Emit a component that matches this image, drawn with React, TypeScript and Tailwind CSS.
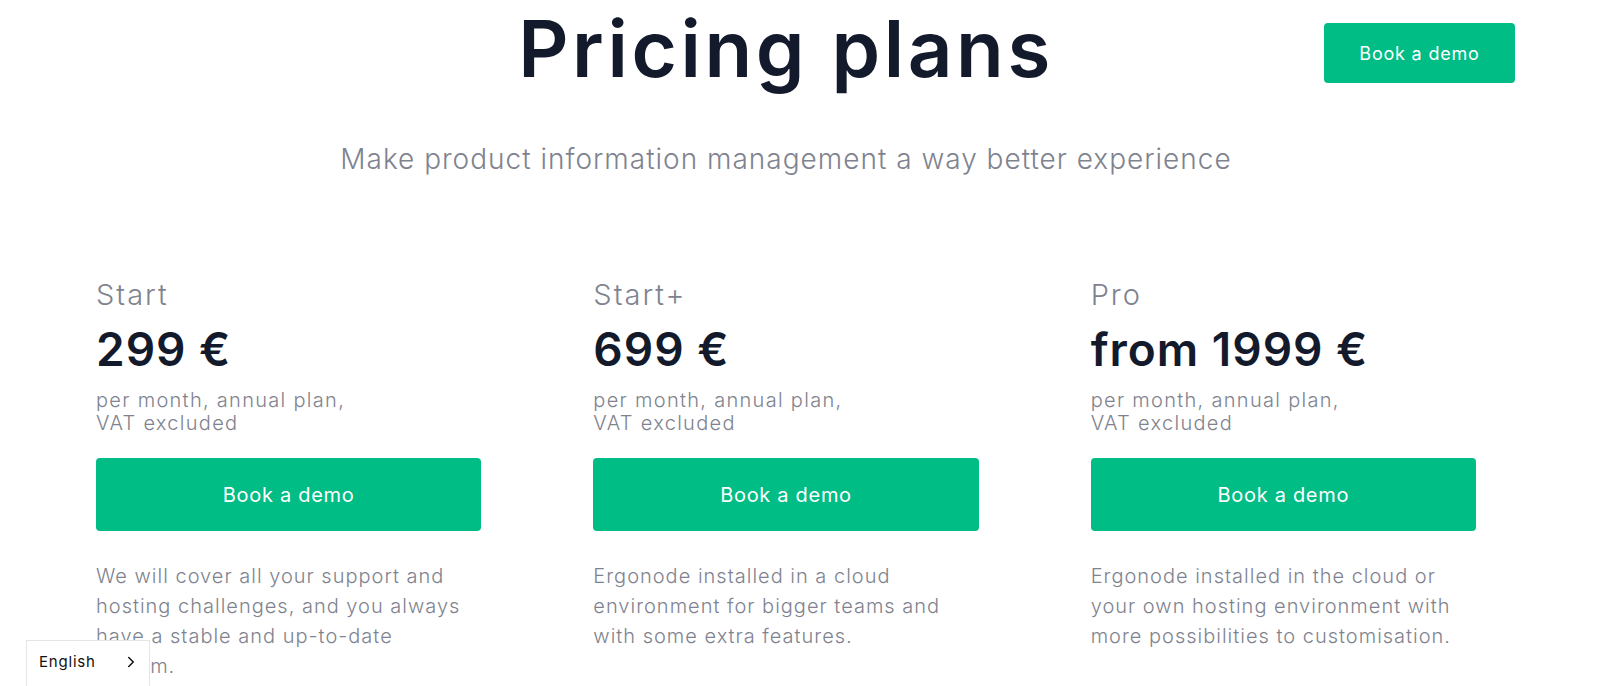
import { ChevronRight } from "lucide-react";

const plans = [
    {
        name: "Start",
        price: "299 €",
        description:
            "We will cover all your support and hosting challenges, and you always have a stable and up-to-date system.",
    },
    {
        name: "Start+",
        price: "699 €",
        description:
            "Ergonode installed in a cloud environment for bigger teams and with some extra features.",
    },
    {
        name: "Pro",
        price: "from 1999 €",
        description:
            "Ergonode installed in the cloud or your own hosting environment with more possibilities to customisation.",
    },
];

export default function App() {
    return (
        <div className="relative h-[686px] overflow-hidden bg-white font-['Inter',sans-serif]">
            {/* floating header action */}
            <a
                href="#"
                className="fixed right-[85px] top-[23px] flex h-[60px] w-[191px] items-center justify-center rounded-[4px] bg-[#00bc85] text-[18px] tracking-[0.8px] text-white"
            >
                Book a demo
            </a>

            <div className="ml-[96px] w-[1380px]">
                {/* heading */}
                <div className="flex flex-col items-center">
                    <h1 className="text-[78px] font-semibold leading-[98px] tracking-[3.6px] text-[#131a2b]">
                        Pricing plans
                    </h1>
                    <p className="mt-[43px] text-[28px] font-light leading-[36px] tracking-[1px] text-[#80838f]">
                        Make product information management a way better experience
                    </p>
                </div>

                {/* plans */}
                <div className="mt-[100px] grid grid-cols-3 gap-[112px]">
                    {plans.map((plan) => (
                        <div key={plan.name} className="flex flex-col">
                            <p className="text-[29px] font-light leading-[36px] tracking-[2px] text-[#80838f]">
                                {plan.name}
                            </p>
                            <p className="mt-[8px] text-[46px] font-semibold leading-[56px] tracking-[1px] text-[#131a2b]">
                                {plan.price}
                            </p>
                            <p className="mt-[12px] text-[20px] font-light leading-[23px] tracking-[1.3px] text-[#80838f]">
                                per month, annual plan,
                                <br />
                                VAT excluded
                            </p>
                            <a
                                href="#"
                                className="mt-[23px] flex h-[73px] items-center justify-center rounded-[4px] bg-[#00bc85] text-[20px] tracking-[0.7px] text-white"
                            >
                                Book a demo
                            </a>
                            <p className="mt-[30px] pr-[6px] text-[20px] font-light leading-[30px] tracking-[1px] text-[#80838f]">
                                {plan.description}
                            </p>
                        </div>
                    ))}
                </div>
            </div>

            {/* language switcher */}
            <div className="fixed bottom-[-10px] left-[26px] flex h-[56px] w-[124px] items-start gap-[26px] border border-[#e5e5e5] bg-white pl-[12px] pt-[10px] text-[15px] tracking-[0.8px] text-[#111]">
                <span>English</span>
                <ChevronRight className="mt-[2px] h-[18px] w-[18px]" strokeWidth={2} />
            </div>
        </div>
    );
}
